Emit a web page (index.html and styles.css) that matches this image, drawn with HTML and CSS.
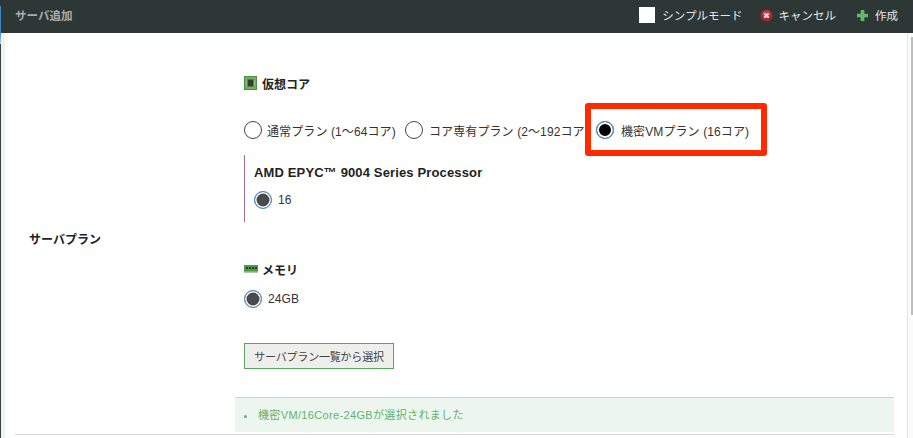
FILE: index.html
```html
<!DOCTYPE html>
<html lang="ja">
<head>
<meta charset="utf-8">
<title>サーバ追加</title>
<link rel="stylesheet" href="styles.css">
</head>
<body>
<header class="topbar">
  <div class="title">サーバ追加</div>
  <nav class="actions">
    <span class="action action-mode"><span class="check"></span>シンプルモード</span>
    <span class="action"><svg class="icon" viewBox="0 0 14 14"><circle cx="7" cy="7" r="6.500" fill="#a8232b"/><circle cx="7" cy="6" r="4.500" fill="#c43a40"/><path d="M4.700 4.700l4.600 4.600M9.300 4.700l-4.600 4.600" stroke="#f6e3e3" stroke-width="2.200"/></svg>キャンセル</span>
    <span class="action"><svg class="icon" viewBox="0 0 14 14"><path d="M5 1h4v4h4v4H9v4H5V9H1V5h4z" fill="#5cbb6c"/></svg>作成</span>
  </nav>
</header>
<div class="accent"></div>
<div class="body-row">
  <div class="edge"></div>
  <main class="content">
    <div class="row">
      <div class="label">サーバプラン</div>
      <div class="field">
        <h3 class="heading"><svg class="chip" viewBox="0 0 13 14"><rect width="13" height="14" fill="#4f8f45"/><rect x="1" y="1" width="11" height="12" fill="#76ad66"/><rect x="3.500" y="3.500" width="6" height="7" fill="#33402f"/><path d="M2 5h1.500M2 7h1.500M2 9h1.500M9.500 5H11M9.500 7H11M9.500 9H11" stroke="#c9d8a8" stroke-width=".6"/></svg>仮想コア</h3>
        <div class="radios">
          <span class="opt opt-a"><span class="radio"></span>通常プラン (1〜64コア)</span>
          <span class="opt opt-b"><span class="radio"></span>コア専有プラン (2〜192コア)</span>
          <span class="opt opt-c"><span class="radio radio-strong"></span>機密VMプラン (16コア)</span>
        </div>
        <section class="cpu">
          <div class="cpu-name">AMD EPYC™ 9004 Series Processor</div>
          <span class="opt"><span class="radio radio-on"></span>16</span>
        </section>
        <h3 class="heading heading-mem"><svg class="ram" viewBox="0 0 14 8"><rect width="14" height="7" fill="#4f9a4a"/><path d="M2 2h2v2H2zM5 2h2v2H5zM8 2h2v2H8zM11 2h2v2h-2z" fill="#24401f"/><rect y="6.500" width="14" height="1.500" fill="#a8cfa0"/></svg>メモリ</h3>
        <div class="mem"><span class="opt"><span class="radio radio-on"></span>24GB</span></div>
        <button class="select-btn" type="button">サーバプラン一覧から選択</button>
      </div>
    </div>
    <ul class="notice"><li>機密VM/16Core-24GBが選択されました</li></ul>
    <div class="rule"></div>
    <div class="highlight"></div>
  </main>
  <div class="scrollbar"><div class="thumb"></div></div>
</div>
</body>
</html>
```
FILE: styles.css
```css
* { box-sizing: border-box; }
html, body { margin: 0; height: 100%; overflow: hidden; }
body {
  position: relative;
  display: flex;
  flex-direction: column;
  width: 913px;
  height: 438px;
  background: #fff;
  color: #222;
  font-family: "Liberation Sans", "Noto Sans CJK JP", sans-serif;
  font-size: 12px;
}
.topbar {
  height: 33px;
  flex: none;
  display: flex;
  align-items: center;
  justify-content: space-between;
  background: #2d3736;
  padding: 0 15px 3px 15px;
}
.title { color: #a9adac; font-size: 11.5px; font-weight: bold; }
.actions { display: flex; align-items: center; gap: 20px; color: #e6e8e8; font-size: 11.5px; }
.action { display: flex; align-items: center; }
.action-mode { margin-right: -3px; }
.check { width: 16px; height: 16px; background: #fff; margin-right: 7px; }
.icon { width: 13px; height: 13px; margin-right: 6px; }
.accent {
  position: absolute;
  left: 0;
  top: 6px;
  width: 1px;
  height: 38px;
  background: linear-gradient(#3f86c6 70%, #bcd8ef);
}
.body-row { flex: 1; min-height: 0; display: flex; }
.edge { width: 5px; flex: none; background: #f1f2f2; border-left: 1px solid #3a4241; }
.content { position: relative; flex: 1; min-width: 0; padding-left: 10px; }
.row { display: flex; height: 364px; }
.label { width: 219px; flex: none; padding: 199px 0 0 14px; font-weight: bold; line-height: 16px; }
.field { padding: 42px 0 0 10px; flex: 1; min-width: 0; }
.heading { display: flex; align-items: center; margin: 0; height: 16px; font-size: 12px; font-weight: bold; color: #222; }
.chip { width: 13px; height: 14px; margin-right: 5px; }
.ram { width: 14px; height: 8px; margin-right: 4px; }
.radios { display: flex; margin: 29px 0 0; height: 20px; white-space: nowrap; }
.opt { display: inline-flex; align-items: center; font-size: 12px; color: #333; letter-spacing: 0.1px; }
.opt-a { width: 161px; }
.opt-b { width: 191px; flex: none; }
.opt-b .radio { margin-right: 6px; }
.radio { width: 18px; height: 18px; border-radius: 50%; border: 1px solid #444; background: #fff; margin-right: 5px; flex: none; }
.radio-on { border: 1.5px solid #4a8cc7; box-shadow: inset 0 0 0 1.5px #fff; background: #4a4a4c; margin-right: 6px; }
.radio-strong { border: 1.5px solid #5d8fc0; box-shadow: inset 0 0 0 2px #fff, 0 0 2px #9bbcdc; background: #000; margin-right: 7px; }
.cpu { margin: 15px 0 0; border-left: 1px solid #a56aa0; padding: 10px 0 10px 9px; height: 67px; }
.cpu-name { font-size: 13px; font-weight: bold; line-height: 16px; letter-spacing: 0.14px; color: #222; margin-bottom: 10px; }
.heading-mem { margin-top: 39px; }
.mem { margin-top: 13px; height: 18px; display: flex; }
.mem .opt, .cpu .opt { height: 18px; }
.select-btn {
  display: block;
  margin-top: 35px;
  width: 150px;
  height: 26px;
  padding: 0;
  border: 1px solid #58a65c;
  border-radius: 0;
  background: #eeeeec;
  color: #444;
  letter-spacing: -0.2px;
  font: 11px "Liberation Sans", "Noto Sans CJK JP", sans-serif;
}
.notice {
  position: absolute;
  left: 230px;
  top: 364px;
  width: 659px;
  height: 35px;
  margin: 0;
  padding: 10px 0 0 23px;
  list-style: none;
  border-top: 1px solid #c0dcc0;
  background: #edf6ee;
  color: #62b26a;
  font-size: 11px;
  line-height: 15px;
  letter-spacing: 0.35px;
}
.notice li { position: relative; }
.notice li::before { content: ""; position: absolute; left: -14px; top: 7px; width: 3px; height: 3px; border-radius: 50%; background: #62b26a; }
.rule { position: absolute; left: 10px; top: 401px; width: 879px; height: 1px; background: #d8d8d8; }
.highlight { position: absolute; left: 580px; top: 70px; width: 182px; height: 53px; border: 6px solid #ff2a00; border-radius: 3px; }
.scrollbar { width: 6px; flex: none; background: #fbfbfb; border-left: 1px solid #e6e6e6; padding: 4px 0 0 3px; }
.thumb { width: 2px; height: 278px; background: #bdbdbd; }
```
